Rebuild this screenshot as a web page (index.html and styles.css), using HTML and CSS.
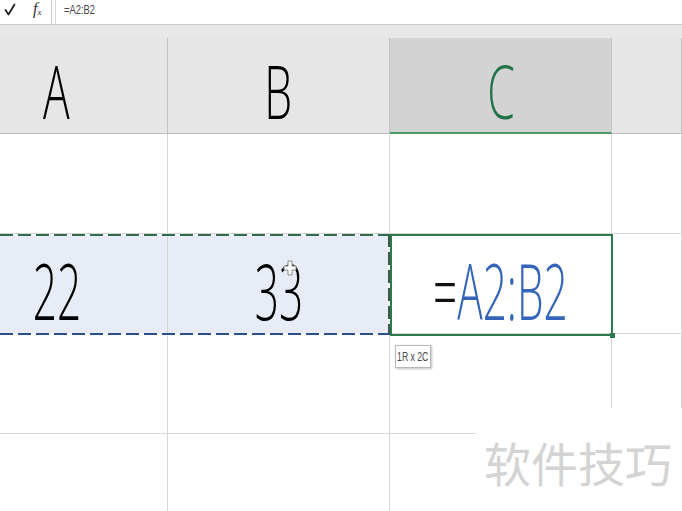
FILE: index.html
```
<!DOCTYPE html>
<html>
<head>
<meta charset="utf-8">
<link rel="stylesheet" href="styles.css">
</head>
<body>
<div class="formula-bar">
  <div class="fb-icons">
    <svg class="check" width="12" height="13" viewBox="0 0 12 13">
      <path d="M1.5 7 L4.5 11.5 L10.5 1.5" fill="none" stroke="#222" stroke-width="1.8" stroke-linecap="round" stroke-linejoin="round"/>
    </svg>
    <span class="fx">f<sub>x</sub></span>
  </div>
  <div class="fb-input"><span class="fb-text">=A2:B2</span></div>
</div>
<div class="band"></div>
<div class="sheet">
  <div class="hdr col-a"><span class="big">A</span></div>
  <div class="hdr"><span class="big">B</span></div>
  <div class="hdr hdr-active"><span class="big">C</span></div>
  <div class="hdr"></div>

  <div class="cell col-a"></div>
  <div class="cell"></div>
  <div class="cell"></div>
  <div class="cell"></div>

  <div class="cell col-a sel"><span class="val">22</span></div>
  <div class="cell sel"><span class="val">33</span></div>
  <div class="cell"><span class="val"><span class="eq">=</span><span class="ref">A2:B2</span></span></div>
  <div class="cell"></div>

  <div class="cell col-a"></div>
  <div class="cell"></div>
  <div class="cell"></div>
  <div class="cell"></div>

  <div class="cell col-a"></div>
  <div class="cell"></div>
  <div class="cell"></div>
  <div class="cell"></div>

  <div class="ants"></div>
  <div class="active"></div>
  <div class="handle"></div>
  <div class="tip"><span class="tip-text">1R x 2C</span></div>
  <svg class="cursor" width="14" height="16" viewBox="0 0 14 16">
    <path d="M5 1h4v5h4v4H9v5H5v-5H1V6h4z" fill="#fff" stroke="#8a8a8a" stroke-width="1"/>
  </svg>
</div>
<div class="watermark">软件技巧</div>
</body>
</html>
```
FILE: styles.css
```
html, body {
  margin: 0;
  padding: 0;
}
body {
  width: 682px;
  height: 511px;
  overflow: hidden;
  background: #fff;
  font-family: "Liberation Sans", Arial, sans-serif;
  position: relative;
}
.formula-bar {
  height: 24px;
  border-bottom: 1px solid #c8c8c8;
  display: flex;
  background: #fff;
}
.fb-icons {
  width: 52px;
  border-right: 1px solid #cfcfcf;
  display: flex;
  align-items: flex-start;
  box-sizing: border-box;
}
.check {
  display: block;
  margin-left: 4px;
  margin-top: 3px;
}
.fx {
  font-family: "Liberation Serif", serif;
  font-style: italic;
  font-size: 16px;
  line-height: 16px;
  margin-left: 17px;
  margin-top: 1px;
  color: #333;
}
.fx sub {
  font-size: 9px;
  vertical-align: -1px;
}
.fb-input {
  flex: 1;
  margin-left: 3px;
  border-left: 1px solid #d6d6d6;
  padding-left: 8px;
}
.fb-text {
  display: inline-block;
  font-size: 13px;
  line-height: 16px;
  color: #444;
  transform: scaleX(0.72);
  transform-origin: left center;
}
.band {
  height: 13px;
  background: #e8e8e8;
}
.sheet {
  position: relative;
  display: grid;
  grid-template-columns: 168px 222px 222px 70px;
  grid-template-rows: 96px 100px 100px 100px 100px;
}
.hdr, .cell {
  box-sizing: border-box;
  border-right: 1px solid #d6d6d6;
  border-bottom: 1px solid #d6d6d6;
  display: flex;
  align-items: center;
  justify-content: center;
}
.col-a {
  padding-right: 54px;
}
.hdr {
  background: #e6e6e6;
  border-right-color: #c2c2c2;
  border-bottom-color: #bdbdbd;
  padding-top: 11px;
}
.hdr-active {
  background: #d3d3d3;
  border-bottom: 2px solid #4c9a66;
  color: #217346;
}
.cell {
  padding-top: 13px;
}
.sel {
  background: #e8ecf7;
}
.big {
  display: inline-block;
  font-family: "Open Sans", "Liberation Sans", sans-serif;
  font-weight: 350;
  font-size: 74px;
  line-height: 1;
  transform: scaleX(0.6);
}
.val {
  display: inline-block;
  font-family: "Open Sans", "Liberation Sans", sans-serif;
  font-weight: 350;
  font-size: 77px;
  line-height: 1;
  color: #000;
  transform: scaleX(0.55);
  white-space: nowrap;
}
.eq {
  color: #111;
}
.ref {
  color: #3565b8;
}
.ants {
  position: absolute;
  left: -54px;
  top: 196px;
  width: 444px;
  height: 101px;
  box-sizing: border-box;
  background:
    repeating-linear-gradient(90deg, #2f6a4a 0 13px, #f4f6fb 13px 18px) left top / 100% 2px no-repeat,
    repeating-linear-gradient(90deg, #2b4e8c 0 13px, #f4f6fb 13px 18px) left bottom / 100% 2px no-repeat,
    repeating-linear-gradient(180deg, #3b5848 0 13px, #f4f6fb 13px 18px) right top / 2px 100% no-repeat;
}
.active {
  position: absolute;
  left: 390px;
  top: 196px;
  width: 223px;
  height: 102px;
  box-sizing: border-box;
  border: 2px solid #2f7a4c;
}
.handle {
  position: absolute;
  left: 610px;
  top: 295px;
  width: 5px;
  height: 5px;
  background: #2f7a4c;
}
.tip {
  position: absolute;
  left: 395px;
  top: 307px;
  width: 36px;
  height: 23px;
  box-sizing: border-box;
  background: #fff;
  border: 1px solid #b8b8b8;
  box-shadow: 1px 1px 2px rgba(0,0,0,0.25);
  display: flex;
  align-items: center;
  justify-content: center;
}
.tip-text {
  display: inline-block;
  font-size: 12px;
  color: #444;
  white-space: nowrap;
  transform: scaleX(0.72);
}
.cursor {
  position: absolute;
  left: 283px;
  top: 222px;
}
.watermark {
  position: absolute;
  left: 476px;
  top: 408px;
  width: 206px;
  height: 103px;
  background: #fff;
  box-sizing: border-box;
  padding-left: 8px;
  padding-top: 24px;
  font-family: "Noto Sans CJK SC", sans-serif;
  font-size: 47px;
  line-height: 60px;
  color: #d4d4d4;
  white-space: nowrap;
}
```
